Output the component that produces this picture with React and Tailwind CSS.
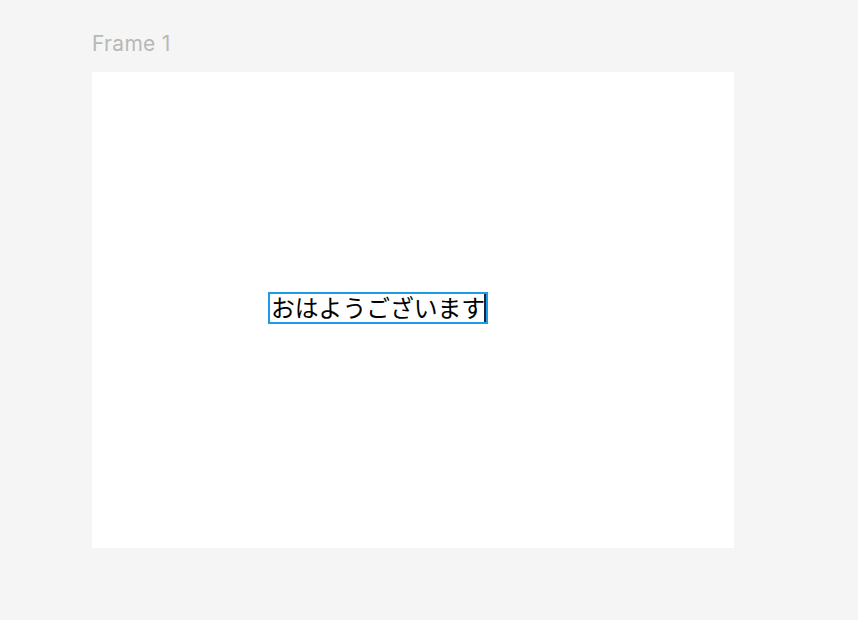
import React from 'react';

const App = () => {
  return (
    <div className="w-[858px] h-[620px] bg-[#f5f5f5] overflow-hidden pl-[92px] pt-[30px]" style={{ fontFamily: 'Inter, "Noto Sans", sans-serif' }}>
      {/* Frame label */}
      <div className="h-[42px] text-[21px] leading-[28px] tracking-[0.3px] text-[#b8b8b8]">Frame 1</div>

      {/* Frame canvas */}
      <div className="relative w-[642px] h-[476px] bg-white">
        <div className="absolute left-[176px] top-[220px] w-[220px] h-[32px] border-2 border-[#1b9be8] flex items-center pl-[1px] pb-[3px]">
          <span className="text-[23.8px] leading-none text-black whitespace-nowrap" style={{ fontFamily: '"Noto Sans CJK JP", sans-serif' }}>
            おはようございます
          </span>
          <span className="absolute right-0 top-0 bottom-0 w-[2px] bg-[#1a2340]" />
        </div>
      </div>
    </div>
  );
};

export default App;
